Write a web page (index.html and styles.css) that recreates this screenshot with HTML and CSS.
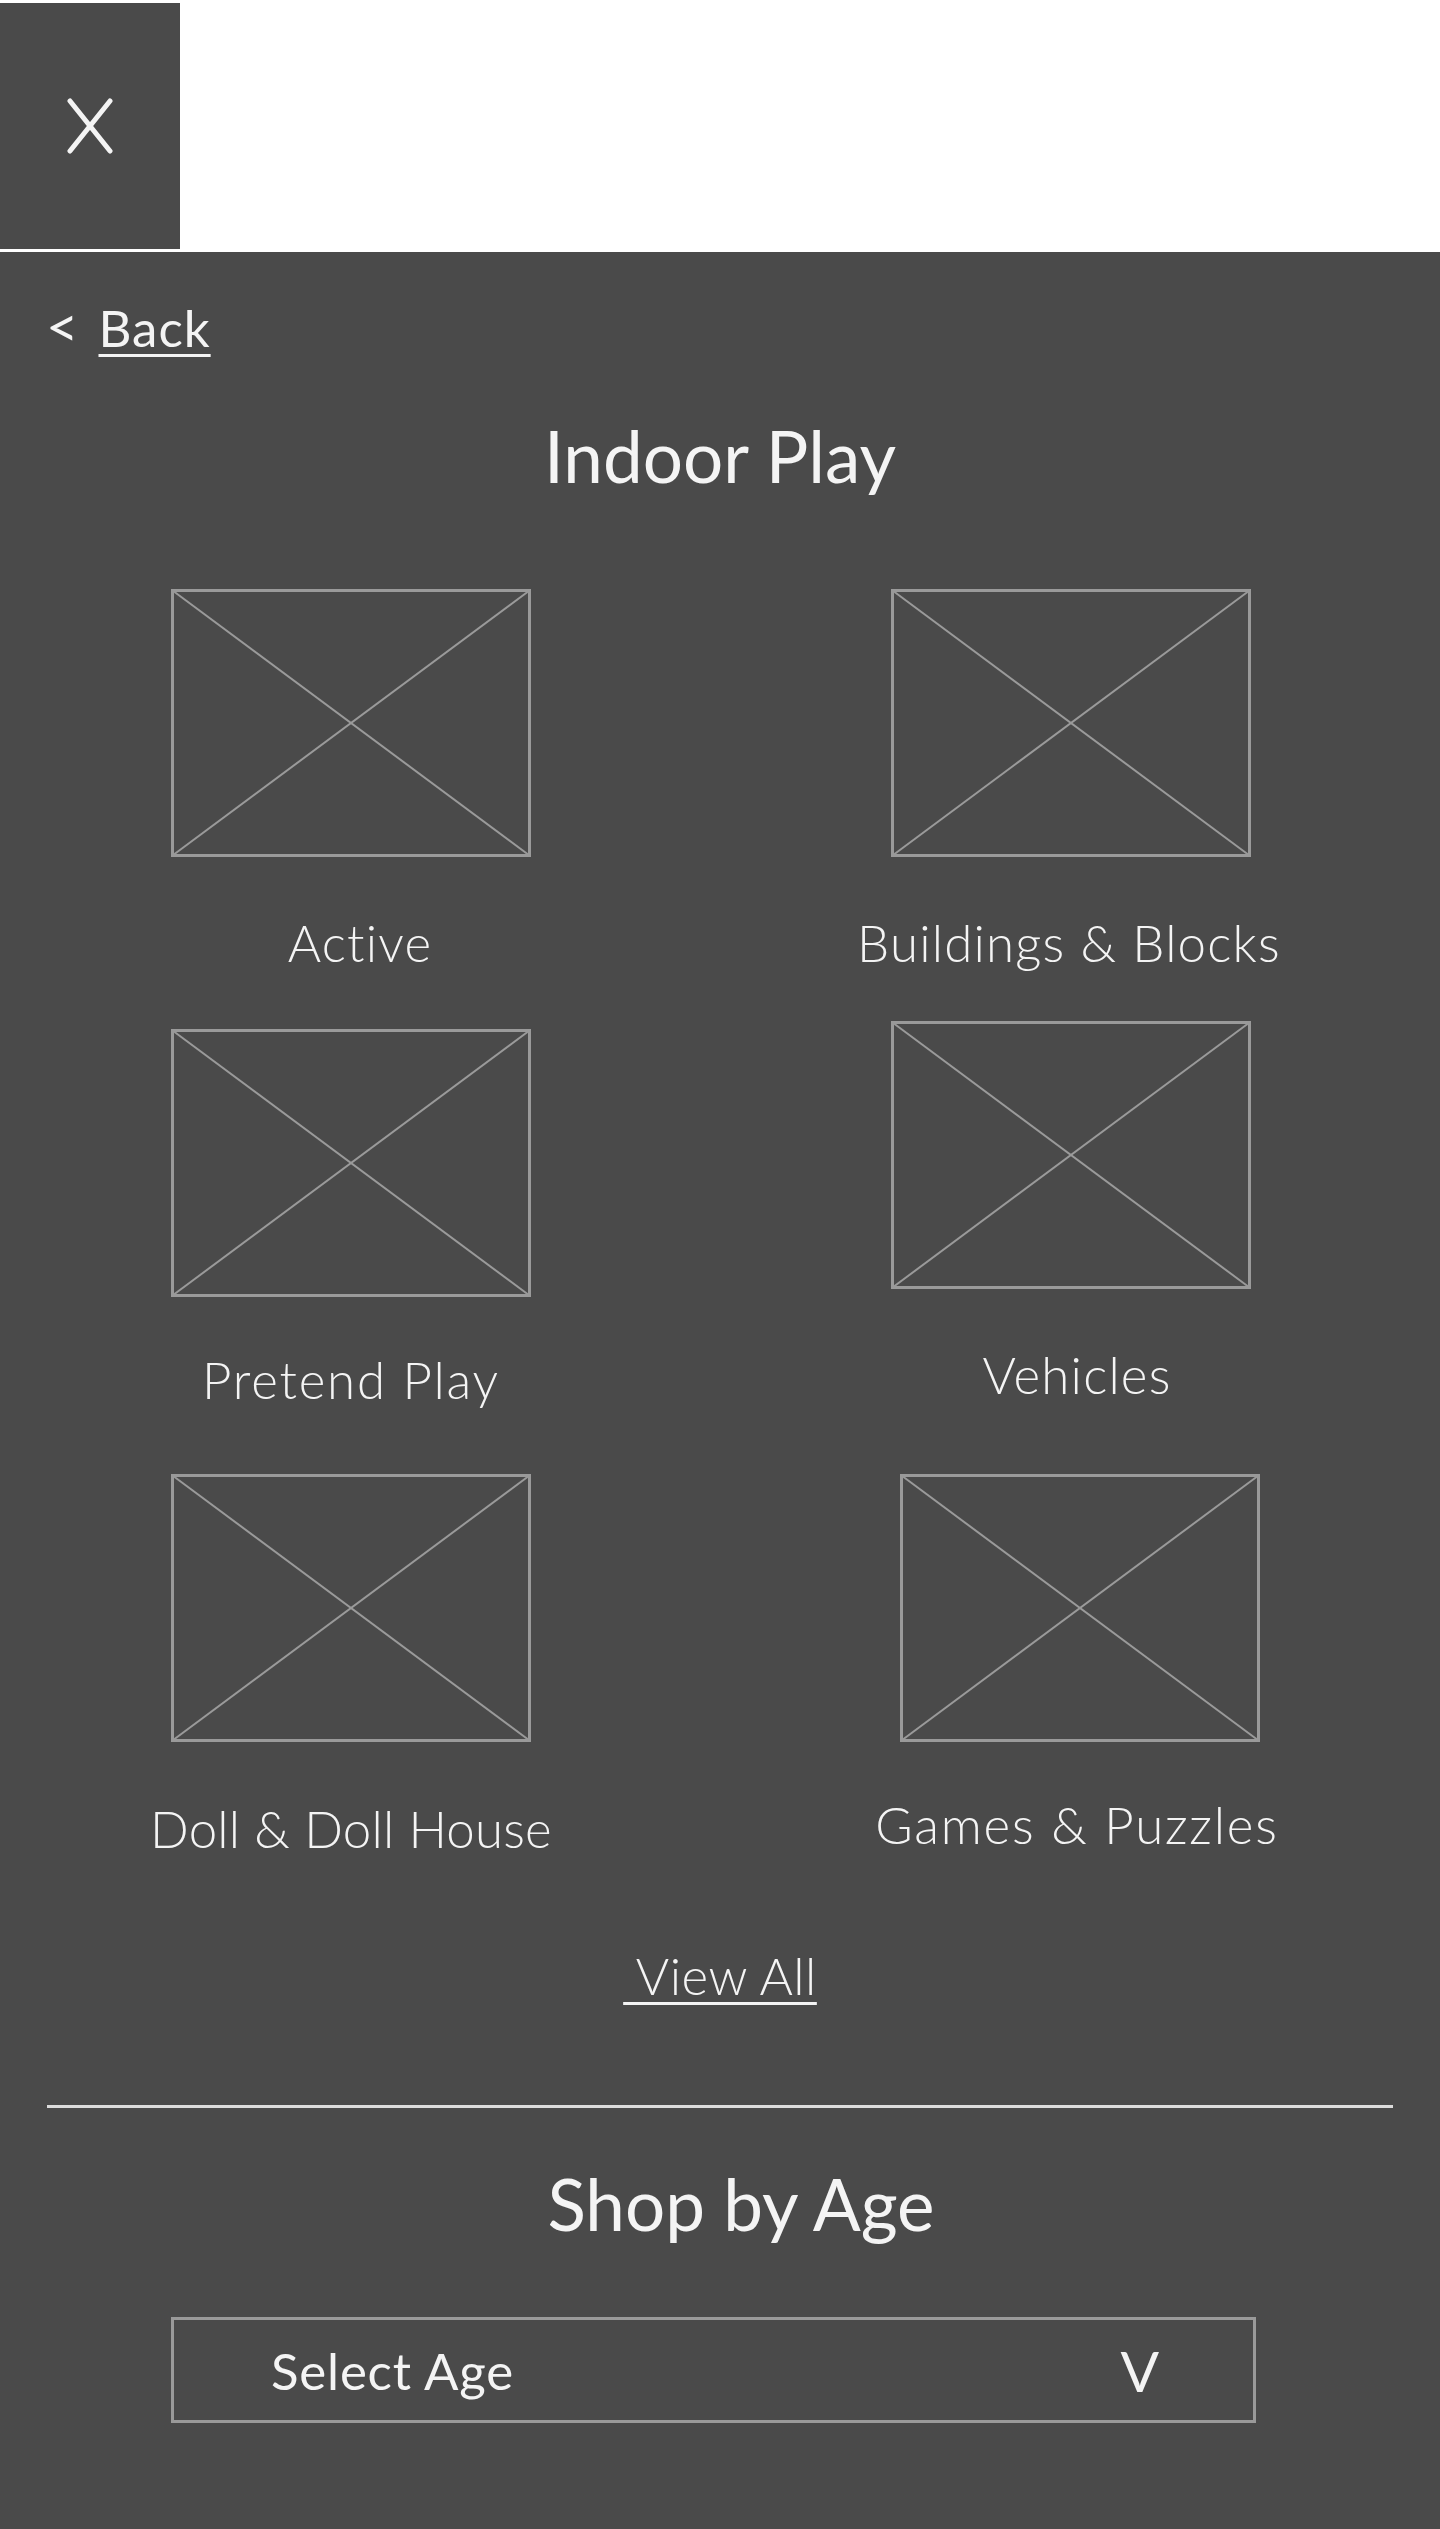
FILE: index.html
```html
<!DOCTYPE html>
<html lang="en">
<head>
<meta charset="utf-8">
<title>Indoor Play</title>
<link rel="stylesheet" href="styles.css">
</head>
<body>
<header class="top">
  <button class="close" aria-label="Close">
    <svg class="close-icon" width="46" height="56" viewBox="0 0 46 56"><line x1="3" y1="3" x2="43" y2="53"/><line x1="43" y1="3" x2="3" y2="53"/></svg>
  </button>
</header>
<main class="panel">
  <a class="back" href="#"><span class="chev">&lt;</span><span class="back-link">Back</span></a>
  <h1 class="title">Indoor Play</h1>
  <div class="grid">
    <div class="cell">
      <svg class="ph" viewBox="0 0 360 268" preserveAspectRatio="none"><rect x="1.5" y="1.5" width="357" height="265"/><line x1="1.5" y1="1.5" x2="358.5" y2="266.5"/><line x1="358.5" y1="1.5" x2="1.5" y2="266.5"/></svg>
      <p class="label nudge-r9">Active</p>
    </div>
    <div class="cell">
      <svg class="ph" viewBox="0 0 360 268" preserveAspectRatio="none"><rect x="1.5" y="1.5" width="357" height="265"/><line x1="1.5" y1="1.5" x2="358.5" y2="266.5"/><line x1="358.5" y1="1.5" x2="1.5" y2="266.5"/></svg>
      <p class="label nudge-l2">Buildings &amp; Blocks</p>
    </div>
    <div class="cell drop-8">
      <svg class="ph" viewBox="0 0 360 268" preserveAspectRatio="none"><rect x="1.5" y="1.5" width="357" height="265"/><line x1="1.5" y1="1.5" x2="358.5" y2="266.5"/><line x1="358.5" y1="1.5" x2="1.5" y2="266.5"/></svg>
      <p class="label tight wide">Pretend Play</p>
    </div>
    <div class="cell">
      <svg class="ph" viewBox="0 0 360 268" preserveAspectRatio="none"><rect x="1.5" y="1.5" width="357" height="265"/><line x1="1.5" y1="1.5" x2="358.5" y2="266.5"/><line x1="358.5" y1="1.5" x2="1.5" y2="266.5"/></svg>
      <p class="label nudge-r6">Vehicles</p>
    </div>
    <div class="cell drop-16">
      <svg class="ph" viewBox="0 0 360 268" preserveAspectRatio="none"><rect x="1.5" y="1.5" width="357" height="265"/><line x1="1.5" y1="1.5" x2="358.5" y2="266.5"/><line x1="358.5" y1="1.5" x2="1.5" y2="266.5"/></svg>
      <p class="label loose narrow">Doll &amp; Doll House</p>
    </div>
    <div class="cell drop-16">
      <svg class="ph nudge-r8" viewBox="0 0 360 268" preserveAspectRatio="none"><rect x="1.5" y="1.5" width="357" height="265"/><line x1="1.5" y1="1.5" x2="358.5" y2="266.5"/><line x1="358.5" y1="1.5" x2="1.5" y2="266.5"/></svg>
      <p class="label tight wide nudge-r6">Games &amp; Puzzles</p>
    </div>
  </div>
  <p class="view-all"><a href="#">&nbsp;View All</a></p>
  <hr class="divider">
  <h2 class="title age-title">Shop by Age</h2>
  <div class="select"><span class="select-text">Select Age</span><span class="caret">V</span></div>
</main>
</body>
</html>
```

FILE: styles.css
```css
* { box-sizing: border-box; }

body {
  margin: 0;
  background: #ffffff;
  font-family: "Lato", "Open Sans", "Noto Sans", sans-serif;
  color: #f4f4f4;
}

.top {
  height: 252px;
  padding-top: 3px;
}

.close {
  width: 180px;
  height: 246px;
  border: 0;
  padding: 0;
  margin: 0;
  background: #4a4a4a;
  display: flex;
  align-items: center;
  justify-content: center;
}

.close-icon line {
  stroke: #f4f4f4;
  stroke-width: 5;
  stroke-linecap: round;
}

.panel {
  background: #4a4a4a;
  height: 2277px;
  padding-top: 48px;
  overflow: hidden;
}

.back {
  display: flex;
  align-items: baseline;
  height: 51px;
  padding-left: 46px;
  color: #f4f4f4;
  text-decoration: none;
  font-size: 51px;
  line-height: 51px;
  font-weight: 400;
}

.chev {
  margin-right: 20px;
  font-size: 56px;
  line-height: 51px;
  font-weight: 400;
}

.back-link {
  letter-spacing: 1px;
  text-decoration: underline;
  text-decoration-thickness: 3px;
  text-underline-offset: 7px;
}

.title {
  margin: 69px 0 0;
  font-size: 71px;
  line-height: 71px;
  font-weight: 400;
  text-align: center;
}

.grid {
  margin-top: 98px;
  display: grid;
  grid-template-columns: 702px 702px;
  column-gap: 18px;
  row-gap: 53px;
  align-items: start;
}

.cell {
  display: flex;
  flex-direction: column;
  align-items: center;
}

.drop-8 { margin-top: 8px; }
.drop-16 { margin-top: 16px; }

.ph {
  display: block;
  width: 360px;
  height: 268px;
}

.ph rect,
.ph line {
  fill: none;
  stroke: #9a9a9a;
}

.ph rect { stroke-width: 3; }
.ph line { stroke-width: 2; }

.label {
  margin: 60px 0 0;
  font-size: 51px;
  line-height: 51px;
  font-weight: 300;
  letter-spacing: 1.2px;
  white-space: nowrap;
}

.label.wide { letter-spacing: 1.8px; }
.label.narrow { letter-spacing: 0.2px; }
.label.tight { margin-top: 57px; }
.label.loose { margin-top: 61px; }

.nudge-r9 { margin-left: 18px; }
.nudge-r8 { margin-left: 17px; }
.nudge-r6 { margin-left: 12px; }
.nudge-l2 { margin-right: 4px; }

.view-all {
  margin: 96px 0 0;
  text-align: center;
  font-size: 51px;
  line-height: 51px;
  font-weight: 300;
  letter-spacing: 0.5px;
}

.view-all a {
  color: #f4f4f4;
  text-decoration: underline;
  text-decoration-thickness: 3px;
  text-underline-offset: 7px;
}

.divider {
  margin: 104px 47px 0;
  height: 0;
  border: 0;
  border-top: 3px solid #dcdcdc;
}

.age-title {
  margin-top: 60px;
  padding-left: 42px;
}

.select {
  margin: 78px 0 0 171px;
  width: 1085px;
  height: 106px;
  border: 3px solid #9a9a9a;
  display: flex;
  align-items: center;
  justify-content: space-between;
  padding: 0 94px 0 97px;
}

.select-text {
  font-size: 51px;
  line-height: 51px;
  font-weight: 400;
  letter-spacing: 0.8px;
}

.caret {
  font-size: 57px;
  line-height: 57px;
  font-weight: 400;
}
```
